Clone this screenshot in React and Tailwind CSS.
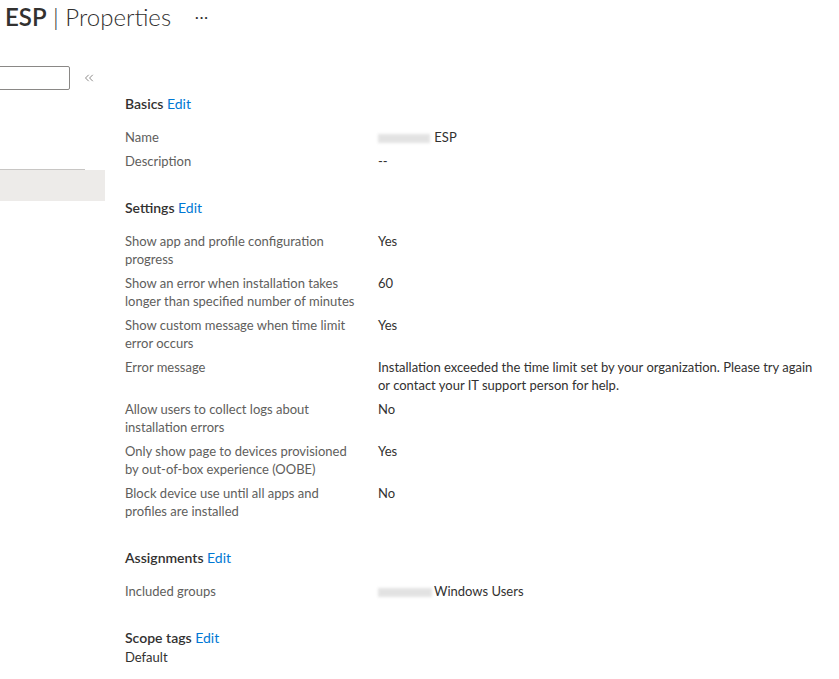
import { ChevronsLeft } from 'lucide-react'

const settings = [
  ['Show app and profile configuration progress', 'Yes'],
  ['Show an error when installation takes longer than specified number of minutes', '60'],
  ['Show custom message when time limit error occurs', 'Yes'],
  [
    'Error message',
    'Installation exceeded the time limit set by your organization. Please try again or contact your IT support person for help.',
  ],
  ['Allow users to collect logs about installation errors', 'No'],
  ['Only show page to devices provisioned by out-of-box experience (OOBE)', 'Yes'],
  ['Block device use until all apps and profiles are installed', 'No'],
]

function Redacted({ w }) {
  return (
    <span
      className="inline-block h-[9px] bg-[#dcdcdc] blur-[1.5px] opacity-80 align-middle"
      style={{ width: w }}
    />
  )
}

function Heading({ title }) {
  return (
    <h3 className="text-[14px] leading-[20px] font-semibold text-[#323130]">
      {title} <span className="font-normal text-[#0078d4]">Edit</span>
    </h3>
  )
}

function Row({ label, children }) {
  return (
    <div className="grid grid-cols-[232px_448px] gap-x-[21px] pb-[6px]">
      <div className="text-[#605e5c]">{label}</div>
      <div className="text-[#323130]">{children}</div>
    </div>
  )
}

export default function App() {
  return (
    <div
      className="w-[839px] h-[679px] bg-white overflow-hidden text-[13px] leading-[18px]"
      style={{ fontFamily: '"Segoe UI", Lato, "Open Sans", sans-serif' }}
    >
      {/* 헤더 */}
      <div className="h-[34px] pl-[5px] flex items-center">
        <h1 className="text-[24px] leading-[32px] text-[#323130]">
          <span className="font-semibold">ESP</span>
          <span className="font-light"> | Properties</span>
        </h1>
        <span className="ml-[24px] text-[#323130] text-[14px] tracking-[1px]">···</span>
      </div>

      <div className="flex">
        {/* 왼쪽 메뉴 */}
        <div className="w-[105px] shrink-0 pt-[32px]">
          <div className="flex items-center">
            <div className="-ml-[12px] w-[82px] h-[24px] border border-[#8a8886] rounded-[2px]" />
            <ChevronsLeft size={14} strokeWidth={1.25} className="ml-[12px] text-[#605e5c]" />
          </div>
          <div className="mt-[79px] w-[85px] h-px bg-[#c8c6c4]" />
          <div className="h-[31px] bg-[#edebe9]" />
        </div>

        {/* 속성 */}
        <div className="pl-[20px] pt-[60px]">
          <Heading title="Basics" />
          <div className="mt-[14px]">
            <Row label="Name">
              <Redacted w="52px" /> <span className="ml-[1px]">ESP</span>
            </Row>
            <Row label="Description">--</Row>
          </div>

          <div className="mt-[22px]">
            <Heading title="Settings" />
            <div className="mt-[14px]">
              {settings.map(([label, value]) => (
                <Row key={label} label={label}>
                  {value}
                </Row>
              ))}
            </div>
          </div>

          <div className="mt-[22px]">
            <Heading title="Assignments" />
            <div className="mt-[14px]">
              <Row label="Included groups">
                <Redacted w="54px" />
                <span className="ml-[2px]">Windows Users</span>
              </Row>
            </div>
          </div>

          <div className="mt-[22px]">
            <Heading title="Scope tags" />
            <div className="text-[#323130]">Default</div>
          </div>
        </div>
      </div>
    </div>
  )
}
